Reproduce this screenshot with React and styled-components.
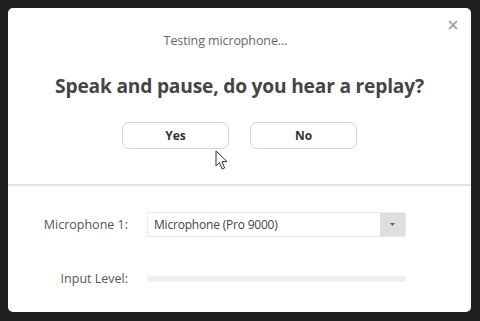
import React from "react";
import styled, { createGlobalStyle } from "styled-components";

const GlobalStyle = createGlobalStyle`
  html, body {
    margin: 0;
    padding: 0;
    background: #202020;
  }
  body {
    font-family: "Open Sans", "Noto Sans", sans-serif;
  }
`;

const Screen = styled.div`
  width: 480px;
  height: 321px;
  padding: 8px 9px 9px 8px;
  box-sizing: border-box;
`;

const Dialog = styled.div`
  position: relative;
  width: 463px;
  height: 304px;
  background: #fff;
  border-radius: 5px;
  display: flex;
  flex-direction: column;
`;

const Close = styled.button`
  position: absolute;
  top: 10px;
  right: 11px;
  border: none;
  background: none;
  padding: 0;
  width: 14px;
  height: 14px;
  display: flex;
  align-items: center;
  justify-content: center;
  cursor: pointer;
`;

const Top = styled.section`
  height: 176px;
  display: flex;
  flex-direction: column;
  align-items: center;
  border-bottom: 2px solid #e2e2e2;
`;

const Status = styled.div`
  margin: 24px 28px 0 0;
  font-size: 12.5px;
  line-height: 18px;
  color: #666;
  letter-spacing: -0.1px;
`;

const Question = styled.h2`
  margin: 23px 0 0;
  font-size: 19.2px;
  line-height: 26px;
  font-weight: 700;
  color: #454545;
  letter-spacing: -0.2px;
`;

const Buttons = styled.div`
  margin-top: 23px;
  display: flex;
  gap: 21px;
`;

const Choice = styled.button`
  width: 107px;
  height: 27px;
  border: 1px solid #d4d4d4;
  border-radius: 7px;
  background: #fff;
  font-family: inherit;
  font-size: 12px;
  font-weight: 700;
  color: #333;
  cursor: pointer;
`;

const Cursor = styled.svg`
  position: absolute;
  left: 207px;
  top: 142px;
`;

const Bottom = styled.section`
  padding: 26px 0 0;
  display: grid;
  grid-template-columns: 120px 259px;
  column-gap: 19px;
  row-gap: 29px;
  align-items: center;
`;

const Label = styled.div`
  text-align: right;
  font-size: 12.5px;
  color: #555;
`;

const Select = styled.div`
  height: 25px;
  display: flex;
  border: 1px solid #eaeaea;
  box-sizing: border-box;
`;

const SelectValue = styled.div`
  flex: 1;
  display: flex;
  align-items: center;
  padding-left: 6px;
  font-size: 12px;
  letter-spacing: -0.2px;
  color: #444;
`;

const SelectArrow = styled.div`
  width: 25px;
  background: #dedede;
  display: flex;
  align-items: center;
  justify-content: center;
`;

const LevelRow = styled.div`
  height: 25px;
  display: flex;
  align-items: center;
`;

const LevelBar = styled.div`
  width: 100%;
  height: 6px;
  border-radius: 3px;
  background: #efefef;
`;

export default function App() {
  return (
    <>
      <GlobalStyle />
      <Screen>
        <Dialog>
          <Close aria-label="Close">
            <svg width="10" height="10" viewBox="0 0 10 10">
              <path d="M1 1L9 9M9 1L1 9" stroke="#a8a8a8" strokeWidth="1.8" />
            </svg>
          </Close>
          <Top>
            <Status>Testing microphone...</Status>
            <Question>Speak and pause, do you hear a replay?</Question>
            <Buttons>
              <Choice>Yes</Choice>
              <Choice>No</Choice>
            </Buttons>
          </Top>
          <Bottom>
            <Label>Microphone 1:</Label>
            <Select>
              <SelectValue>Microphone (Pro 9000)</SelectValue>
              <SelectArrow>
                <svg width="5" height="3" viewBox="0 0 5 3">
                  <path d="M0 0H5L2.5 3Z" fill="#666" />
                </svg>
              </SelectArrow>
            </Select>
            <Label>Input Level:</Label>
            <LevelRow>
              <LevelBar />
            </LevelRow>
          </Bottom>
          <Cursor width="13" height="21" viewBox="0 0 13 21">
            <path
              d="M1 1V16L4.5 12.5L7.2 19L9.6 18L7 11.6H12Z"
              fill="#fff"
              stroke="#333"
              strokeWidth="1"
              strokeLinejoin="round"
            />
          </Cursor>
        </Dialog>
      </Screen>
    </>
  );
}
